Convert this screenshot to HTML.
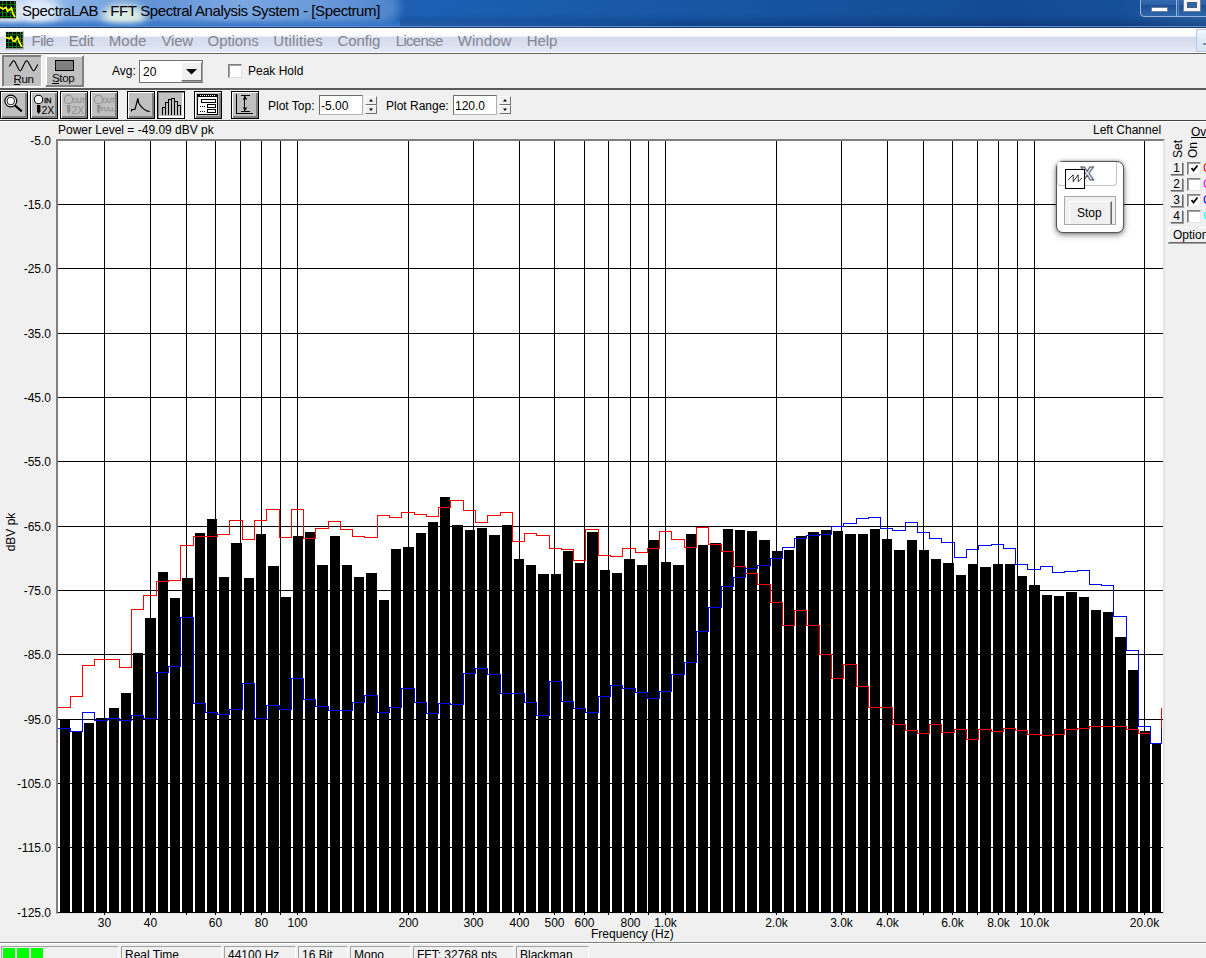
<!DOCTYPE html>
<html><head><meta charset="utf-8"><title>SpectraLAB - FFT Spectral Analysis System - [Spectrum]</title>
<style>
*{box-sizing:border-box;margin:0;padding:0}
html,body{width:1206px;height:958px;overflow:hidden;background:#f0f0f0;font-family:"Liberation Sans",Arial,sans-serif;font-size:12px;color:#000}
.abs,body>div,body>svg{position:absolute}
#title{left:0;top:0;width:1206px;height:28px;background:linear-gradient(90deg,#1c5fb2 0,#1c5fb2 420px,#1858a6 640px,#134c94 1000px,#154f98 1120px,#2a62a6 1206px);overflow:hidden}
#title .glow{position:absolute;left:-30px;top:-10px;width:430px;height:34px;border-radius:17px;background:linear-gradient(90deg,rgba(175,205,240,.95) 0,rgba(150,188,235,.92) 22%,rgba(105,152,216,.9) 42%,rgba(135,176,230,.9) 62%,rgba(112,158,222,.88) 85%,rgba(95,145,212,.7) 100%);filter:blur(4px)}
#title .p1{position:absolute;left:14px;top:-4px;width:46px;height:30px;border-radius:50%;background:rgba(236,243,252,.85);filter:blur(5px)}
#title .p2{position:absolute;left:102px;top:4px;width:44px;height:24px;border-radius:50%;background:rgba(232,244,232,.9);filter:blur(4px)}
#title .p3{position:absolute;left:-6px;top:-2px;width:26px;height:26px;background:rgba(225,236,250,.8);filter:blur(3px)}
#title .edge{position:absolute;left:0;top:20px;width:700px;height:6px;background:linear-gradient(rgba(60,125,210,0),rgba(60,125,210,.8));-webkit-mask-image:linear-gradient(90deg,#000 0,#000 400px,transparent 700px);mask-image:linear-gradient(90deg,#000 0,#000 400px,transparent 700px)}
#title .shade{position:absolute;left:400px;top:0;width:806px;height:26px;background:linear-gradient(rgba(0,20,70,0) 0,rgba(0,20,70,0) 55%,rgba(0,20,70,.28) 100%)}
#title .dark{position:absolute;left:0;top:26px;width:1206px;height:2px;background:linear-gradient(#5f8fcc 50%,#1d3d6e 50%)}
#ttext{position:absolute;left:22px;top:1px;font-size:15px;letter-spacing:-.39px;line-height:20px;white-space:nowrap;color:#000}
#menubar{left:0;top:28px;width:1206px;height:24px;background:linear-gradient(#fff 0,#fdfdfe 28%,#f2f4fa 35%,#d5daee 38%,#dbe0f1 70%,#e6eaf7 100%)}
#menubar span{position:absolute;top:3px;font-size:15px;line-height:20px;color:#85858f;white-space:nowrap}
.hline{left:0;width:1206px;background:#555}
.btn3{position:absolute;background:#c0c0c0;border:1px solid #000;box-shadow:inset 1px 1px 0 #fff,inset -1px -1px 0 #808080,inset -2px -2px 0 #808080}
.yl{position:absolute;left:0;width:51px;text-align:right;font-size:12px;line-height:14px;white-space:nowrap}
.xl{position:absolute;top:916px;width:61px;text-align:center;font-size:12px;line-height:14px;white-space:nowrap}
.t12{position:absolute;font-size:12px;line-height:14px;white-space:nowrap}
.edit{position:absolute;background:#fff;border:1px solid #6d6d6d;border-right-color:#b0b0b0;border-bottom-color:#b0b0b0}
.spin{position:absolute;width:12px;height:9px;background:#f0f0f0;border:1px solid #fff;border-right-color:#707070;border-bottom-color:#707070}
.sp{position:absolute;top:946px;height:16px;border:1px solid #a0a0a0;border-right-color:#fff;border-bottom-color:#fff;font-size:12px;line-height:16px;padding-left:3px;white-space:nowrap;overflow:hidden}
.nb{position:absolute;left:1170px;width:13px;height:13px;background:#f0f0f0;border:1px solid #fff;border-right-color:#696969;border-bottom-color:#696969;box-shadow:1px 1px 0 #a0a0a0;font-size:12px;line-height:11px;text-align:center}
.cb{position:absolute;left:1187px;width:14px;height:13px;background:#fff;border:1px solid #808080;border-right-color:#e8e8e8;border-bottom-color:#e8e8e8;box-shadow:inset 1px 1px 0 #a0a0a0}
</style></head><body>

<!-- title bar -->
<div id="title"><div class="glow"></div><div class="p1"></div><div class="p2"></div><div class="p3"></div><div class="edge"></div><div class="shade"></div><div class="dark"></div>
<svg class="abs" style="left:0;top:1px" width="17" height="19" viewBox="0 0 17 19"><rect x="0" y="0" width="16" height="18" fill="#000"/><path d="M2.500 0v18M6.500 0v18M10.500 0v18M14.500 0v18M0 3.500h16M0 7.500h16M0 11.500h16M0 15.500h16" stroke="#007200" stroke-width="1" shape-rendering="crispEdges"/><path d="M0 6l3 2 3-1.500 1.500 3.500 2.500-1.500 1.500-1.500 1.500 6 2 3" stroke="#ffff00" stroke-width="1.700" fill="none"/><path d="M0 18h16.500V0" stroke="#d4d4d4" stroke-width="1.400" fill="none"/></svg>
<div id="ttext">SpectraLAB - FFT Spectral Analysis System - [Spectrum]</div>
<!-- caption buttons -->
<div class="abs" style="left:1140px;top:-6px;width:80px;height:23px;border:1px solid #9db6d8;border-radius:4px;background:linear-gradient(#3a70b4,#2b62a8 45%,#1c5098 50%,#2e66ac)"></div>
<div class="abs" style="left:1176px;top:0;width:1px;height:16px;background:#9db6d8"></div>
<div class="abs" style="left:1178px;top:0;width:1px;height:16px;background:#5580b8"></div>
<div class="abs" style="left:1151px;top:7px;width:17px;height:5px;background:#fff;border:1px solid #6f7f96;border-radius:1px"></div>
<div class="abs" style="left:1184px;top:-4px;width:16px;height:15px;border:3px solid #f4f4f4;border-top-width:6px;border-bottom-width:3px;outline:1px solid #6f7f96;background:#2b62a8;box-shadow:inset 0 0 0 1px #4a5a78"></div>
</div>

<!-- menu bar -->
<div id="menubar">
<svg class="abs" style="left:5px;top:3px" width="19" height="19" viewBox="0 0 19 19"><rect x="0" y="0" width="19" height="19" fill="#e8e8e8"/><rect x="1" y="1" width="17" height="16.500" fill="#000"/><path d="M3.500 1v16M7.500 1v16M11.500 1v16M15.500 1v16M1 3.500h17M1 7.500h17M1 11.500h17M1 15.500h17" stroke="#007200" stroke-width="1" shape-rendering="crispEdges"/><path d="M1 6.300l3.500 1.500 1.500-2 2 4 2 .500 2.500-4 2 5.500 2.500 4" stroke="#ffff00" stroke-width="1.700" fill="none"/><path d="M0 18.200h18.300V0" stroke="#b8b8b8" stroke-width="1.300" fill="none"/></svg>
<span style="left:31.6px;letter-spacing:-0.52px">File</span><span style="left:68.8px;letter-spacing:-0.21px">Edit</span><span style="left:108.7px;letter-spacing:0.06px">Mode</span><span style="left:161.6px;letter-spacing:-0.21px">View</span><span style="left:207.6px;letter-spacing:-0.08px">Options</span><span style="left:273.3px;letter-spacing:0.13px">Utilities</span><span style="left:337.5px;letter-spacing:-0.11px">Config</span><span style="left:395.8px;letter-spacing:-0.71px">License</span><span style="left:457.7px;letter-spacing:0.08px">Window</span><span style="left:526.7px;letter-spacing:-0.09px">Help</span>
<div class="abs" style="left:1196px;top:1px;width:14px;height:23px;background:linear-gradient(#f2f7fd,#dde9f7 45%,#d6e4f5);border:1px solid #b8c8e0"></div>
<div class="abs" style="left:1203px;top:15px;width:4px;height:2px;background:#8090a8"></div>
</div>
<div class="hline" style="top:52px;height:1px;background:#fff"></div>
<div class="hline" style="top:53px;height:1px;background:#606060"></div>

<!-- toolbar 1 -->
<div class="abs" style="left:2px;top:55px;width:40px;height:32px;background:#c0c0c0;border:1px solid #808080;border-right-color:#fff;border-bottom-color:#fff;box-shadow:inset 1px 1px 0 #808080">
<svg class="abs" style="left:0;top:0" width="40" height="32"><path d="M6.2 10.5 L9.4 5.6 Q10.6 3.8 11.8 5.6 L16 13.8 Q17.2 15.8 18.4 13.8 L22.4 5.6 Q23.6 3.8 24.8 5.6 L29.4 13.8 Q30.8 15.9 32 13.6 L34.8 8.6" stroke="#000" stroke-width="1.1" fill="none"/><rect x="11" y="28" width="6" height="1" fill="#000"/></svg>
<div class="t12" style="left:10.500px;top:16px;font-size:11.5px;letter-spacing:-.3px">Run</div></div>
<div class="abs" style="left:45px;top:55px;width:39px;height:32px;background:#c0c0c0;border:1px solid #fff;border-right-color:#808080;border-bottom-color:#808080;box-shadow:inset -1px -1px 0 #808080,inset 1px 1px 0 #fff">
<div class="abs" style="left:9px;top:4px;width:19px;height:11px;background:#808080;border:1px solid #000"></div>
<div class="abs" style="left:6px;top:27px;width:7px;height:1px;background:#000"></div>
<div class="t12" style="left:6px;top:14.500px;font-size:11.5px;letter-spacing:-.3px">Stop</div></div>
<div class="t12" style="left:112px;top:64px">Avg:</div>
<div class="edit" style="left:139px;top:60px;width:64px;height:23px;border-color:#707070"><div class="t12" style="left:3px;top:3.500px">20</div>
<div class="abs" style="left:41px;top:1px;width:21px;height:19px;background:#f0f0f0;border:1px solid #fff;border-right-color:#707070;border-bottom-color:#707070;box-shadow:1px 1px 0 #a0a0a0"></div>
<svg class="abs" style="left:46px;top:8px" width="11" height="6"><path d="M0 0h11l-5.5 5.5z" fill="#000"/></svg></div>
<div class="abs" style="left:228px;top:64px;width:14px;height:14px;background:#fff;border:1px solid #808080;border-right-color:#e0e0e0;border-bottom-color:#e0e0e0;box-shadow:inset 1px 1px 0 #a0a0a0"></div>
<div class="t12" style="left:248px;top:64px">Peak Hold</div>
<div class="hline" style="top:88px;height:2px;background:#5a5a5a"></div>

<!-- toolbar 2 -->
<div class="btn3" style="left:0;top:91px;width:28px;height:28px"><svg width="26" height="26" viewBox="0 0 26 26"><circle cx="9.800" cy="9" r="5.900" fill="#fff" stroke="#000" stroke-width="1.200"/><circle cx="9.800" cy="9" r="3.800" fill="none" stroke="#000" stroke-width=".900"/><path d="M14 13.500l6.800 5.800" stroke="#000" stroke-width="2.300"/></svg></div>
<div class="btn3" style="left:30px;top:91px;width:28px;height:28px"><svg width="26" height="26" viewBox="0 0 26 26"><circle cx="7.500" cy="7.500" r="4.200" fill="#fff" stroke="#000" stroke-width="1.100"/><path d="M6 13h3.400v6.500l-1.700 2.500-1.700-2.500z" fill="#000"/><text x="13" y="11" font-size="7.500" font-family="Liberation Sans,sans-serif" stroke="#000" stroke-width=".3">IN</text><text x="10.500" y="21.500" font-size="10.500" font-family="Liberation Sans,sans-serif">2X</text></svg></div>
<div class="btn3" style="left:60px;top:91px;width:28px;height:28px"><svg width="26" height="26" viewBox="0 0 26 26" fill="#909090"><circle cx="7.500" cy="7.500" r="4.200" fill="#c0c0c0" stroke="#909090" stroke-width="1.100"/><path d="M6 13h3.400v6.500l-1.700 2.500-1.700-2.500z"/><text x="11" y="10.500" font-size="6.300" font-family="Liberation Sans,sans-serif" stroke="#909090" stroke-width=".25">OUT</text><text x="10.500" y="21.500" font-size="10.500" font-family="Liberation Sans,sans-serif">2X</text></svg></div>
<div class="btn3" style="left:90px;top:91px;width:28px;height:28px"><svg width="26" height="26" viewBox="0 0 26 26" fill="#909090"><circle cx="7.500" cy="7.500" r="4.200" fill="#c0c0c0" stroke="#909090" stroke-width="1.100"/><path d="M6 13h3.400v3l-1 1 1 1-1 1 .500 1.500-1.200 1-1.700-2.500z"/><text x="11" y="10.500" font-size="6.300" font-family="Liberation Sans,sans-serif" stroke="#909090" stroke-width=".25">OUT</text><text x="9.500" y="18.800" font-size="5.800" font-family="Liberation Sans,sans-serif" stroke="#909090" stroke-width=".25">FULL</text></svg></div>
<div class="btn3" style="left:127px;top:91px;width:28px;height:28px"><svg width="26" height="26" viewBox="0 0 26 26"><path d="M3.600 19.500v-2h3.300l1.300-4.600 1.600-6.600 1.100 5.300 2 2.600 2.600 2.700 3.300 2 3 .600" stroke="#000" stroke-width="1.200" fill="none"/></svg></div>
<div class="abs" style="left:157px;top:91px;width:28px;height:28px;background:#c0c0c0;border:1px solid #000;box-shadow:inset 1px 1px 0 #808080,inset -1px -1px 0 #fff,inset -2px -2px 0 #fff"><svg width="26" height="26" viewBox="0 0 26 26"><path d="M4.500 23v-8h3v8M7.500 15v-4.500h3v12.500M10.500 10.500v-3h3v15.500M13.500 7.500v-1h3v16.500M16.500 9.500h3v13.500M19.500 13.500h3v9.500" stroke="#000" stroke-width="1" fill="none" shape-rendering="crispEdges"/></svg></div>
<div class="btn3" style="left:194px;top:91px;width:28px;height:28px"><svg width="26" height="26" viewBox="0 0 26 26"><g shape-rendering="crispEdges"><rect x="2.500" y="2" width="20" height="20" fill="#fff" stroke="#000" stroke-width="1"/><rect x="3" y="2" width="19" height="3" fill="#000"/><path d="M5 3.500h15" stroke="#fff" stroke-dasharray="1 1"/><rect x="6.500" y="7.500" width="14" height="3" fill="#fff" stroke="#000"/><rect x="12.500" y="12.500" width="8" height="3" fill="#fff" stroke="#000"/><rect x="12.500" y="17.500" width="8" height="3" fill="#fff" stroke="#000"/><path d="M5 14.500h6M5 19.500h6" stroke="#000" stroke-dasharray="1 1"/></g></svg></div>
<div class="btn3" style="left:231px;top:91px;width:28px;height:28px"><svg width="26" height="26" viewBox="0 0 26 26"><path d="M4.500 2v19.500h16.500M8.500 3.500h9M8.500 19.500h9M12.500 3.500v16" stroke="#000" stroke-width="1" fill="none" shape-rendering="crispEdges"/><path d="M13 4l-2.300 3.500h4.600zM13 19l-2.300-3.500h4.600z" fill="#000"/></svg></div>
<div class="t12" style="left:268px;top:98.500px">Plot Top:</div>
<div class="edit" style="left:319px;top:95px;width:44px;height:20px"><div class="t12" style="left:1px;top:2.500px">-5.00</div></div>
<div class="spin" style="left:365px;top:96px"></div><div class="spin" style="left:365px;top:105px"></div>
<svg class="abs" style="left:365px;top:96px" width="12" height="18"><path d="M6 3l2 2.500h-4zM6 15l2-2.500h-4z" fill="#000"/></svg>
<div class="t12" style="left:386px;top:98.500px">Plot Range:</div>
<div class="edit" style="left:453px;top:95px;width:44px;height:20px"><div class="t12" style="left:1px;top:2.500px">120.0</div></div>
<div class="spin" style="left:499px;top:96px"></div><div class="spin" style="left:499px;top:105px"></div>
<svg class="abs" style="left:499px;top:96px" width="12" height="18"><path d="M6 3l2 2.500h-4zM6 15l2-2.500h-4z" fill="#000"/></svg>
<div class="hline" style="top:120px;height:1px;background:#404040"></div>
<div class="hline" style="top:121px;height:1px;background:#fff"></div>

<!-- plot header -->
<div class="t12" style="left:58px;top:123px">Power Level = -49.09 dBV pk</div>
<div class="t12" style="left:1093px;top:123px">Left Channel</div>

<!-- plot -->
<div class="abs" style="left:56px;top:139px;width:1109px;height:775px;background:#fff;border-left:2px solid #808080;border-top:2px solid #808080;border-right:2px solid #e4e4e4;border-bottom:1px solid #e4e4e4"></div>
<svg class="abs" style="left:0;top:0" width="1206" height="958" viewBox="0 0 1206 958">
<g fill="#000"><rect x="104" y="141" width="1" height="771"/><rect x="150" y="141" width="1" height="771"/><rect x="186" y="141" width="1" height="771"/><rect x="215" y="141" width="1" height="771"/><rect x="240" y="141" width="1" height="771"/><rect x="261" y="141" width="1" height="771"/><rect x="280" y="141" width="1" height="771"/><rect x="297" y="141" width="1" height="771"/><rect x="408" y="141" width="1" height="771"/><rect x="473" y="141" width="1" height="771"/><rect x="519" y="141" width="1" height="771"/><rect x="554" y="141" width="1" height="771"/><rect x="584" y="141" width="1" height="771"/><rect x="608" y="141" width="1" height="771"/><rect x="630" y="141" width="1" height="771"/><rect x="648" y="141" width="1" height="771"/><rect x="665" y="141" width="1" height="771"/><rect x="776" y="141" width="1" height="771"/><rect x="841" y="141" width="1" height="771"/><rect x="887" y="141" width="1" height="771"/><rect x="923" y="141" width="1" height="771"/><rect x="952" y="141" width="1" height="771"/><rect x="977" y="141" width="1" height="771"/><rect x="998" y="141" width="1" height="771"/><rect x="1017" y="141" width="1" height="771"/><rect x="1034" y="141" width="1" height="771"/><rect x="1144" y="141" width="1" height="771"/><rect x="58" y="204" width="1105" height="1"/><rect x="58" y="268" width="1105" height="1"/><rect x="58" y="333" width="1105" height="1"/><rect x="58" y="397" width="1105" height="1"/><rect x="58" y="461" width="1105" height="1"/><rect x="58" y="526" width="1105" height="1"/><rect x="58" y="590" width="1105" height="1"/><rect x="58" y="654" width="1105" height="1"/><rect x="58" y="719" width="1105" height="1"/><rect x="58" y="783" width="1105" height="1"/><rect x="58" y="847" width="1105" height="1"/><rect x="58" y="912" width="1105" height="1"/></g>
<g fill="#000" shape-rendering="crispEdges"><rect x="60" y="720" width="10" height="193"/><rect x="72" y="732" width="10" height="181"/><rect x="84" y="723" width="10" height="190"/><rect x="96" y="718" width="11" height="195"/><rect x="109" y="708" width="10" height="205"/><rect x="121" y="693" width="10" height="220"/><rect x="133" y="653" width="10" height="260"/><rect x="145" y="618" width="11" height="295"/><rect x="158" y="572" width="10" height="341"/><rect x="170" y="598" width="10" height="315"/><rect x="182" y="578" width="11" height="335"/><rect x="195" y="533" width="10" height="380"/><rect x="207" y="519" width="10" height="394"/><rect x="219" y="577" width="10" height="336"/><rect x="231" y="543" width="11" height="370"/><rect x="244" y="578" width="10" height="335"/><rect x="256" y="534" width="10" height="379"/><rect x="268" y="566" width="11" height="347"/><rect x="281" y="597" width="10" height="316"/><rect x="293" y="536" width="10" height="377"/><rect x="305" y="532" width="10" height="381"/><rect x="317" y="565" width="11" height="348"/><rect x="330" y="536" width="10" height="377"/><rect x="342" y="565" width="10" height="348"/><rect x="354" y="577" width="10" height="336"/><rect x="366" y="573" width="11" height="340"/><rect x="379" y="600" width="10" height="313"/><rect x="391" y="549" width="10" height="364"/><rect x="403" y="547" width="11" height="366"/><rect x="416" y="533" width="10" height="380"/><rect x="428" y="522" width="10" height="391"/><rect x="440" y="497" width="10" height="416"/><rect x="452" y="525" width="11" height="388"/><rect x="465" y="530" width="10" height="383"/><rect x="477" y="528" width="10" height="385"/><rect x="489" y="535" width="11" height="378"/><rect x="502" y="525" width="10" height="388"/><rect x="514" y="559" width="10" height="354"/><rect x="526" y="565" width="10" height="348"/><rect x="538" y="574" width="11" height="339"/><rect x="551" y="574" width="10" height="339"/><rect x="563" y="551" width="10" height="362"/><rect x="575" y="563" width="10" height="350"/><rect x="587" y="532" width="11" height="381"/><rect x="600" y="570" width="10" height="343"/><rect x="612" y="573" width="10" height="340"/><rect x="624" y="559" width="11" height="354"/><rect x="637" y="565" width="10" height="348"/><rect x="649" y="540" width="10" height="373"/><rect x="661" y="562" width="10" height="351"/><rect x="673" y="565" width="11" height="348"/><rect x="686" y="534" width="10" height="379"/><rect x="698" y="545" width="10" height="368"/><rect x="710" y="543" width="11" height="370"/><rect x="723" y="529" width="10" height="384"/><rect x="735" y="530" width="10" height="383"/><rect x="747" y="531" width="10" height="382"/><rect x="759" y="540" width="11" height="373"/><rect x="772" y="551" width="10" height="362"/><rect x="784" y="550" width="10" height="363"/><rect x="796" y="536" width="10" height="377"/><rect x="808" y="532" width="11" height="381"/><rect x="821" y="530" width="10" height="383"/><rect x="833" y="531" width="10" height="382"/><rect x="845" y="534" width="11" height="379"/><rect x="858" y="534" width="10" height="379"/><rect x="870" y="529" width="10" height="384"/><rect x="882" y="539" width="10" height="374"/><rect x="894" y="550" width="11" height="363"/><rect x="907" y="540" width="10" height="373"/><rect x="919" y="550" width="10" height="363"/><rect x="931" y="559" width="10" height="354"/><rect x="943" y="563" width="11" height="350"/><rect x="956" y="575" width="10" height="338"/><rect x="968" y="564" width="10" height="349"/><rect x="980" y="567" width="11" height="346"/><rect x="993" y="564" width="10" height="349"/><rect x="1005" y="564" width="10" height="349"/><rect x="1017" y="576" width="10" height="337"/><rect x="1029" y="585" width="11" height="328"/><rect x="1042" y="595" width="10" height="318"/><rect x="1054" y="596" width="10" height="317"/><rect x="1066" y="592" width="11" height="321"/><rect x="1079" y="597" width="10" height="316"/><rect x="1091" y="610" width="10" height="303"/><rect x="1103" y="612" width="10" height="301"/><rect x="1115" y="637" width="11" height="276"/><rect x="1128" y="670" width="10" height="243"/><rect x="1140" y="731" width="10" height="182"/><rect x="1152" y="744" width="9" height="169"/></g>
<path d="M58.5,707.5 L70.5,707.5 L70.5,696.5 L82.5,696.5 L82.5,665.5 L94.5,665.5 L94.5,659.5 L107.5,659.5 L107.5,659.5 L119.5,659.5 L119.5,667.5 L131.5,667.5 L131.5,609.5 L143.5,609.5 L143.5,595.5 L156.5,595.5 L156.5,581.5 L168.5,581.5 L168.5,580.5 L180.5,580.5 L180.5,545.5 L193.5,545.5 L193.5,536.5 L205.5,536.5 L205.5,536.5 L217.5,536.5 L217.5,534.5 L229.5,534.5 L229.5,520.5 L242.5,520.5 L242.5,539.5 L254.5,539.5 L254.5,520.5 L266.5,520.5 L266.5,509.5 L279.5,509.5 L279.5,537.5 L291.5,537.5 L291.5,509.5 L303.5,509.5 L303.5,538.5 L315.5,538.5 L315.5,528.5 L328.5,528.5 L328.5,521.5 L340.5,521.5 L340.5,529.5 L352.5,529.5 L352.5,536.5 L364.5,536.5 L364.5,537.5 L377.5,537.5 L377.5,515.5 L389.5,515.5 L389.5,517.5 L401.5,517.5 L401.5,512.5 L414.5,512.5 L414.5,514.5 L426.5,514.5 L426.5,516.5 L438.5,516.5 L438.5,507.5 L450.5,507.5 L450.5,500.5 L463.5,500.5 L463.5,510.5 L475.5,510.5 L475.5,522.5 L487.5,522.5 L487.5,515.5 L500.5,515.5 L500.5,512.5 L512.5,512.5 L512.5,541.5 L524.5,541.5 L524.5,533.5 L536.5,533.5 L536.5,535.5 L549.5,535.5 L549.5,548.5 L561.5,548.5 L561.5,549.5 L573.5,549.5 L573.5,560.5 L585.5,560.5 L585.5,529.5 L598.5,529.5 L598.5,555.5 L610.5,555.5 L610.5,556.5 L622.5,556.5 L622.5,548.5 L635.5,548.5 L635.5,552.5 L647.5,552.5 L647.5,548.5 L659.5,548.5 L659.5,531.5 L671.5,531.5 L671.5,539.5 L684.5,539.5 L684.5,547.5 L696.5,547.5 L696.5,527.5 L708.5,527.5 L708.5,544.5 L721.5,544.5 L721.5,551.5 L733.5,551.5 L733.5,566.5 L745.5,566.5 L745.5,573.5 L757.5,573.5 L757.5,584.5 L770.5,584.5 L770.5,602.5 L782.5,602.5 L782.5,625.5 L794.5,625.5 L794.5,610.5 L806.5,610.5 L806.5,625.5 L819.5,625.5 L819.5,654.5 L831.5,654.5 L831.5,678.5 L843.5,678.5 L843.5,664.5 L856.5,664.5 L856.5,686.5 L868.5,686.5 L868.5,707.5 L880.5,707.5 L880.5,707.5 L892.5,707.5 L892.5,724.5 L905.5,724.5 L905.5,730.5 L917.5,730.5 L917.5,733.5 L929.5,733.5 L929.5,724.5 L941.5,724.5 L941.5,732.5 L954.5,732.5 L954.5,729.5 L966.5,729.5 L966.5,739.5 L978.5,739.5 L978.5,729.5 L991.5,729.5 L991.5,731.5 L1003.5,731.5 L1003.5,728.5 L1015.5,728.5 L1015.5,730.5 L1027.5,730.5 L1027.5,734.5 L1040.5,734.5 L1040.5,735.5 L1052.5,735.5 L1052.5,734.5 L1064.5,734.5 L1064.5,729.5 L1077.5,729.5 L1077.5,728.5 L1089.5,728.5 L1089.5,726.5 L1101.5,726.5 L1101.5,726.5 L1113.5,726.5 L1113.5,726.5 L1126.5,726.5 L1126.5,729.5 L1138.5,729.5 L1138.5,733.5 L1150.5,733.5 L1150.5,743.5 L1161.5,743.5 L1161.5,708.5" fill="none" stroke="#ff0000" stroke-width="1" stroke-linecap="square" stroke-linejoin="miter" shape-rendering="crispEdges"/>
<path d="M58.5,728.5 L70.5,728.5 L70.5,731.5 L82.5,731.5 L82.5,712.5 L94.5,712.5 L94.5,720.5 L107.5,720.5 L107.5,718.5 L119.5,718.5 L119.5,720.5 L131.5,720.5 L131.5,715.5 L143.5,715.5 L143.5,718.5 L156.5,718.5 L156.5,672.5 L168.5,672.5 L168.5,666.5 L180.5,666.5 L180.5,617.5 L193.5,617.5 L193.5,703.5 L205.5,703.5 L205.5,712.5 L217.5,712.5 L217.5,714.5 L229.5,714.5 L229.5,709.5 L242.5,709.5 L242.5,683.5 L254.5,683.5 L254.5,718.5 L266.5,718.5 L266.5,705.5 L279.5,705.5 L279.5,709.5 L291.5,709.5 L291.5,678.5 L303.5,678.5 L303.5,699.5 L315.5,699.5 L315.5,706.5 L328.5,706.5 L328.5,710.5 L340.5,710.5 L340.5,710.5 L352.5,710.5 L352.5,702.5 L364.5,702.5 L364.5,695.5 L377.5,695.5 L377.5,712.5 L389.5,712.5 L389.5,707.5 L401.5,707.5 L401.5,688.5 L414.5,688.5 L414.5,702.5 L426.5,702.5 L426.5,713.5 L438.5,713.5 L438.5,703.5 L450.5,703.5 L450.5,704.5 L463.5,704.5 L463.5,673.5 L475.5,673.5 L475.5,668.5 L487.5,668.5 L487.5,674.5 L500.5,674.5 L500.5,693.5 L512.5,693.5 L512.5,693.5 L524.5,693.5 L524.5,702.5 L536.5,702.5 L536.5,715.5 L549.5,715.5 L549.5,681.5 L561.5,681.5 L561.5,701.5 L573.5,701.5 L573.5,708.5 L585.5,708.5 L585.5,712.5 L598.5,712.5 L598.5,696.5 L610.5,696.5 L610.5,685.5 L622.5,685.5 L622.5,688.5 L635.5,688.5 L635.5,692.5 L647.5,692.5 L647.5,698.5 L659.5,698.5 L659.5,691.5 L671.5,691.5 L671.5,674.5 L684.5,674.5 L684.5,662.5 L696.5,662.5 L696.5,631.5 L708.5,631.5 L708.5,607.5 L721.5,607.5 L721.5,586.5 L733.5,586.5 L733.5,577.5 L745.5,577.5 L745.5,568.5 L757.5,568.5 L757.5,565.5 L770.5,565.5 L770.5,558.5 L782.5,558.5 L782.5,547.5 L794.5,547.5 L794.5,538.5 L806.5,538.5 L806.5,535.5 L819.5,535.5 L819.5,534.5 L831.5,534.5 L831.5,526.5 L843.5,526.5 L843.5,523.5 L856.5,523.5 L856.5,518.5 L868.5,518.5 L868.5,517.5 L880.5,517.5 L880.5,528.5 L892.5,528.5 L892.5,530.5 L905.5,530.5 L905.5,522.5 L917.5,522.5 L917.5,532.5 L929.5,532.5 L929.5,538.5 L941.5,538.5 L941.5,542.5 L954.5,542.5 L954.5,557.5 L966.5,557.5 L966.5,549.5 L978.5,549.5 L978.5,545.5 L991.5,545.5 L991.5,544.5 L1003.5,544.5 L1003.5,548.5 L1015.5,548.5 L1015.5,564.5 L1027.5,564.5 L1027.5,569.5 L1040.5,569.5 L1040.5,566.5 L1052.5,566.5 L1052.5,572.5 L1064.5,572.5 L1064.5,571.5 L1077.5,571.5 L1077.5,570.5 L1089.5,570.5 L1089.5,584.5 L1101.5,584.5 L1101.5,585.5 L1113.5,585.5 L1113.5,616.5 L1126.5,616.5 L1126.5,650.5 L1138.5,650.5 L1138.5,726.5 L1150.5,726.5 L1150.5,743.5 L1161.5,743.5 L1161.5,728.5" fill="none" stroke="#0000ff" stroke-width="1" stroke-linecap="square" stroke-linejoin="miter" shape-rendering="crispEdges"/>
<rect x="57" y="741" width="1" height="1" fill="#f00"/>
<g fill="#000"><rect x="104" y="913" width="1" height="2"/><rect x="150" y="913" width="1" height="2"/><rect x="186" y="913" width="1" height="2"/><rect x="215" y="913" width="1" height="2"/><rect x="240" y="913" width="1" height="2"/><rect x="261" y="913" width="1" height="2"/><rect x="280" y="913" width="1" height="2"/><rect x="297" y="913" width="1" height="2"/><rect x="408" y="913" width="1" height="2"/><rect x="473" y="913" width="1" height="2"/><rect x="519" y="913" width="1" height="2"/><rect x="554" y="913" width="1" height="2"/><rect x="584" y="913" width="1" height="2"/><rect x="608" y="913" width="1" height="2"/><rect x="630" y="913" width="1" height="2"/><rect x="648" y="913" width="1" height="2"/><rect x="665" y="913" width="1" height="2"/><rect x="776" y="913" width="1" height="2"/><rect x="841" y="913" width="1" height="2"/><rect x="887" y="913" width="1" height="2"/><rect x="923" y="913" width="1" height="2"/><rect x="952" y="913" width="1" height="2"/><rect x="977" y="913" width="1" height="2"/><rect x="998" y="913" width="1" height="2"/><rect x="1017" y="913" width="1" height="2"/><rect x="1034" y="913" width="1" height="2"/><rect x="1144" y="913" width="1" height="2"/></g>
</svg>
<div class="yl" style="top:134px">-5.0</div><div class="yl" style="top:198px">-15.0</div><div class="yl" style="top:262px">-25.0</div><div class="yl" style="top:327px">-35.0</div><div class="yl" style="top:391px">-45.0</div><div class="yl" style="top:455px">-55.0</div><div class="yl" style="top:520px">-65.0</div><div class="yl" style="top:584px">-75.0</div><div class="yl" style="top:648px">-85.0</div><div class="yl" style="top:713px">-95.0</div><div class="yl" style="top:777px">-105.0</div><div class="yl" style="top:841px">-115.0</div><div class="yl" style="top:906px">-125.0</div>
<div class="xl" style="left:74px">30</div><div class="xl" style="left:120px">40</div><div class="xl" style="left:185px">60</div><div class="xl" style="left:231px">80</div><div class="xl" style="left:267px">100</div><div class="xl" style="left:378px">200</div><div class="xl" style="left:443px">300</div><div class="xl" style="left:489px">400</div><div class="xl" style="left:524px">500</div><div class="xl" style="left:554px">600</div><div class="xl" style="left:600px">800</div><div class="xl" style="left:635px">1.0k</div><div class="xl" style="left:746px">2.0k</div><div class="xl" style="left:811px">3.0k</div><div class="xl" style="left:857px">4.0k</div><div class="xl" style="left:922px">6.0k</div><div class="xl" style="left:968px">8.0k</div><div class="xl" style="left:1004px">10.0k</div><div class="xl" style="left:1114px">20.0k</div>
<div class="t12" style="left:591px;top:927px">Frequency (Hz)</div>
<div class="t12" style="left:-10px;top:525px;width:42px;text-align:center;transform:rotate(-90deg);transform-origin:center">dBV pk</div>

<!-- floating run/stop widget -->
<div class="abs" style="left:1056px;top:161px;width:68px;height:72px;background:#fff;border:1px solid #555;border-radius:7px;box-shadow:0 2px 6px rgba(0,0,0,.45),0 0 3px rgba(0,0,0,.3)"></div>
<div class="abs" style="left:1057px;top:162px;width:60px;height:24px;border:1px solid #c4c4c4;border-top:none;border-left-color:#e0e0e0;border-radius:0 0 4px 4px;background:#fff"></div>
<div class="abs" style="left:1080.500px;top:158px;font-size:24px;line-height:28px;font-weight:bold;color:#e2e2e2;-webkit-text-stroke:1px #50546e">x</div>
<div class="abs" style="left:1065px;top:169px;width:20px;height:20px;background:#fff;border:1px solid #000"></div>
<svg class="abs" style="left:1065px;top:169px" width="20" height="20"><path d="M3.300 10.800l4.900-5v6.900l5-6.900v6.900l4-3.900" stroke="#000" stroke-width=".8" fill="none"/></svg>
<div class="abs" style="left:1064px;top:196px;width:52px;height:29px;background:#f0f0f0;border:1px solid #a8a8a8"></div>
<div class="abs" style="left:1069px;top:201px;width:43px;height:23px;background:#f0f0f0;border-left:1px solid #fff;border-top:1px solid #fff;border-right:1px solid #6a6a6a;box-shadow:inset -1px 0 0 #a0a0a0"></div>
<div class="t12" style="left:1077px;top:206px">Stop</div>

<!-- right overlay panel -->
<div class="t12" style="left:1191px;top:125px;text-decoration:underline">Overlays</div>
<div class="t12" style="left:1163px;top:142px;width:30px;text-align:center;transform:rotate(-90deg)">Set</div>
<div class="t12" style="left:1178px;top:143px;width:30px;text-align:center;transform:rotate(-90deg)">On</div>
<div class="nb" style="top:162px">1</div><div class="nb" style="top:178px">2</div><div class="nb" style="top:194px">3</div><div class="nb" style="top:210px">4</div>
<div class="cb" style="top:162px"></div><div class="cb" style="top:178px"></div><div class="cb" style="top:194px"></div><div class="cb" style="top:210px"></div>
<svg class="abs" style="left:1188px;top:162px" width="13" height="46"><path d="M3.500 6l2 2.500 4-5M3.500 38l2 2.500 4-5" stroke="#000" stroke-width="1.800" fill="none"/></svg>
<div class="t12" style="left:1203px;top:161px;color:#f00">O</div><div class="t12" style="left:1203px;top:177px;color:#f0f">O</div><div class="t12" style="left:1203px;top:193px;color:#00f">O</div><div class="t12" style="left:1203px;top:209px;color:#0ff">O</div>
<div class="abs" style="left:1168px;top:227px;width:50px;height:16px;background:#f0f0f0;border:1px solid #fff;border-bottom-color:#696969;box-shadow:0 1px 0 #a0a0a0"><div class="t12" style="left:4px;top:0">Options</div></div>

<!-- status bar -->
<div class="hline" style="top:942px;height:1px;background:#808080"></div>
<div class="hline" style="top:943px;height:1px;background:#fff"></div>
<div class="sp" style="left:1px;width:118px"></div>
<div class="abs" style="left:3px;top:948px;width:12px;height:12px;background:#00ff00"></div><div class="abs" style="left:17px;top:948px;width:12px;height:12px;background:#00ff00"></div><div class="abs" style="left:31px;top:948px;width:12px;height:12px;background:#00ff00"></div>
<div class="sp" style="left:121px;width:101px">Real Time</div>
<div class="sp" style="left:224px;width:72px">44100 Hz</div>
<div class="sp" style="left:298px;width:50px">16 Bit</div>
<div class="sp" style="left:350px;width:61px">Mono</div>
<div class="sp" style="left:413px;width:101px">FFT: 32768 pts</div>
<div class="sp" style="left:516px;width:73px">Blackman</div>
</body></html>
